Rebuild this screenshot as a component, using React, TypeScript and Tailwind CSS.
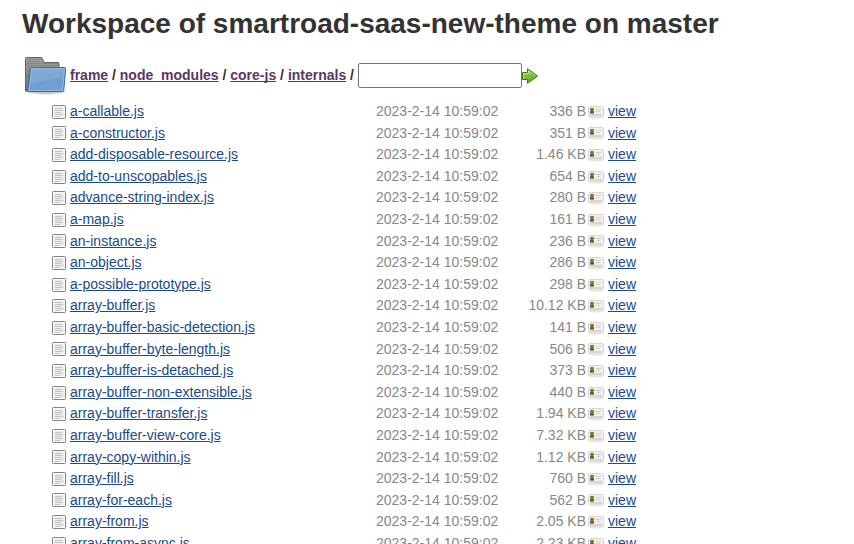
const crumbs = ['frame', 'node_modules', 'core-js', 'internals'];

const files: [string, string][] = [
  ['a-callable.js', '336 B'],
  ['a-constructor.js', '351 B'],
  ['add-disposable-resource.js', '1.46 KB'],
  ['add-to-unscopables.js', '654 B'],
  ['advance-string-index.js', '280 B'],
  ['a-map.js', '161 B'],
  ['an-instance.js', '236 B'],
  ['an-object.js', '286 B'],
  ['a-possible-prototype.js', '298 B'],
  ['array-buffer.js', '10.12 KB'],
  ['array-buffer-basic-detection.js', '141 B'],
  ['array-buffer-byte-length.js', '506 B'],
  ['array-buffer-is-detached.js', '373 B'],
  ['array-buffer-non-extensible.js', '440 B'],
  ['array-buffer-transfer.js', '1.94 KB'],
  ['array-buffer-view-core.js', '7.32 KB'],
  ['array-copy-within.js', '1.12 KB'],
  ['array-fill.js', '760 B'],
  ['array-for-each.js', '562 B'],
  ['array-from.js', '2.05 KB'],
  ['array-from-async.js', '2.23 KB'],
];

function FolderIcon() {
  return (
    <svg width="48" height="42" viewBox="0 0 48 42" className="shrink-0">
      <defs>
        <linearGradient id="back" x1="0" y1="0" x2="0" y2="1">
          <stop offset="0" stopColor="#a3a3a3" />
          <stop offset="1" stopColor="#747474" />
        </linearGradient>
        <linearGradient id="front" x1="0" y1="0" x2="0.2" y2="1">
          <stop offset="0" stopColor="#76a3d6" />
          <stop offset="0.5" stopColor="#6f9dcf" />
          <stop offset="1" stopColor="#6d9fd8" />
        </linearGradient>
        <radialGradient id="shade">
          <stop offset="0.6" stopColor="#000" stopOpacity="0.22" />
          <stop offset="1" stopColor="#000" stopOpacity="0" />
        </radialGradient>
      </defs>
      <ellipse cx="23.5" cy="37.5" rx="22.5" ry="3.5" fill="url(#shade)" />
      <path d="M3.5 37V4.5q0-1 1-1h14.8q.8 0 1.2 1l1.5 4h14q1 0 1 1V37z" fill="url(#back)" stroke="#606060" />
      <path d="M5 5.5h14M5 7.5h15M5 9.5h31M5 11.5h31M5 13.5h3M5 15.5h3M5 17.5h3M5 19.5h3M5 21.5h2M5 23.5h2" stroke="#666" strokeOpacity="0.4" />
      <path d="M9.5 13.5H42.8q1 0 .9 1l-2 22q-.1 1-1 1H6.5q-1 0-.9-1l2.9-22q.1-1 1-1z" fill="url(#front)" stroke="#3465a4" />
      <path d="M9.8 14.6h32.7l-1.9 21.8H7z" fill="none" stroke="#c5dbf3" strokeOpacity="0.5" />
      <path d="M10.3 15.2h31.6l-.8 8.5C29 23.5 20 28 8.3 30z" fill="#fff" fillOpacity="0.1" />
    </svg>
  );
}

function FileIcon() {
  return (
    <svg width="16" height="16" viewBox="0 0 16 16" className="block">
      <rect x="1.5" y="1.5" width="13" height="13" rx="0.8" fill="#eeeeee" stroke="#858585" />
      <rect x="2.5" y="2.5" width="11" height="11" fill="none" stroke="#fafafa" />
      <path d="M4 4.5h7M4 6.5h8M4 8.5h6M4 10.5h8M4 12.5h5" stroke="#c3c3c3" />
    </svg>
  );
}

function FingerprintIcon() {
  return (
    <svg width="16" height="16" viewBox="0 0 16 16" className="block">
      <ellipse cx="8" cy="13.5" rx="6" ry="1.3" fill="#000" fillOpacity="0.06" />
      <rect x="0.5" y="2.5" width="15" height="10.5" rx="1.2" fill="#f0f0ef" stroke="#d6d7d5" />
      <rect x="2" y="4" width="4" height="5.5" fill="#b9b07c" />
      <circle cx="4" cy="5.3" r="1.6" fill="#96691f" />
      <path d="M2 9.5V7.6q2-1.8 4 0v1.9z" fill="#56632a" />
      <path d="M7 5.5h6M8 7.5h4" stroke="#d2d3d0" />
      <path d="M2 11h12" stroke="#bbbdb9" />
    </svg>
  );
}

function ArrowIcon() {
  return (
    <svg width="16" height="16" viewBox="0 0 16 16" className="mt-px shrink-0">
      <defs>
        <linearGradient id="go" x1="0" y1="0" x2="0.4" y2="1">
          <stop offset="0" stopColor="#b2e67c" />
          <stop offset="0.5" stopColor="#7fc840" />
          <stop offset="1" stopColor="#5aa61e" />
        </linearGradient>
      </defs>
      <path d="M.5 4.5h5V.7L15.6 8l-10.1 7.3v-3.8h-5z" fill="url(#go)" stroke="#3c7909" strokeLinejoin="round" />
      <path d="M1.5 10.5v-5h5V2.7l7.3 5.3" fill="none" stroke="#d5f2b6" strokeOpacity="0.6" />
    </svg>
  );
}

export default function App() {
  return (
    <main className="h-[544px] w-[854px] overflow-hidden bg-white pl-[22px] font-['Liberation_Sans',Arial,sans-serif] text-sm text-[#333]">
      <h1 className="pt-[7px] text-[28px] leading-[34px] font-bold whitespace-nowrap">
        Workspace of smartroad-saas-new-theme on master
      </h1>
      <div className="mt-[11px] mb-[3px] flex h-[46px] items-center font-bold">
        <FolderIcon />
        <nav className="flex whitespace-pre">
          {crumbs.map((crumb) => (
            <span key={crumb}>
              <a className="text-[#5c3566] underline [text-decoration-skip-ink:none]">{crumb}</a>
              {' / '}
            </span>
          ))}
        </nav>
        <input
          aria-label="Pattern"
          className="h-[25px] w-[164px] rounded-[2px] border border-[#767676] bg-white outline-none"
        />
        <ArrowIcon />
      </div>
      <table className="ml-[29px] table-fixed border-collapse">
        <tbody>
          {files.map(([name, size]) => (
            <tr key={name} className="h-[21.6px] leading-[21.6px] whitespace-nowrap">
              <td className="w-[19px] p-0"><FileIcon /></td>
              <td className="w-[306px] p-0"><a className="text-[#204a87] underline">{name}</a></td>
              <td className="w-[123px] p-0 text-[#888]">2023-2-14 10:59:02</td>
              <td className="w-[87px] p-0 text-right text-[#888]">{size}</td>
              <td className="w-[22px] p-0 pl-[2px]"><FingerprintIcon /></td>
              <td className="w-[30px] p-0"><a className="text-[#204a87] underline">view</a></td>
            </tr>
          ))}
        </tbody>
      </table>
    </main>
  );
}
